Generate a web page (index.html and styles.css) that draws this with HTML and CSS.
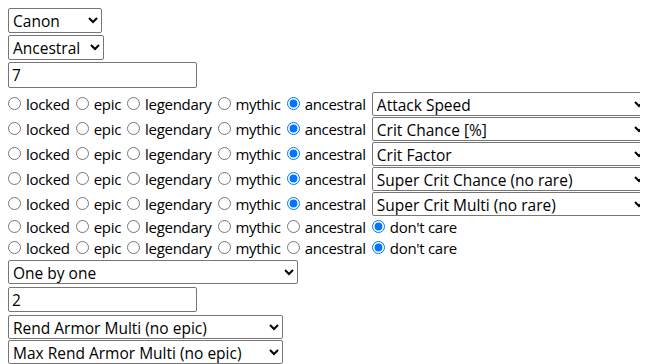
FILE: index.html
```html
<!DOCTYPE html>
<html>
<head>
<meta charset="utf-8">
<link rel="stylesheet" href="styles.css">
</head>
<body>
<div class="form">
  <select class="sel sel-type"><option>Canon</option></select>
  <select class="sel sel-rarity"><option>Ancestral</option></select>
  <input class="num num-level" type="text" value="7">
  <div class="slots">
    <div class="slot">
      <label class="opt"><input type="radio" name="s1"><span>locked</span></label>
      <label class="opt"><input type="radio" name="s1"><span>epic</span></label>
      <label class="opt"><input type="radio" name="s1"><span>legendary</span></label>
      <label class="opt"><input type="radio" name="s1"><span>mythic</span></label>
      <label class="opt"><input type="radio" name="s1" checked><span>ancestral</span></label>
      <select class="sel sel-stat"><option>Attack Speed</option></select>
    </div>
    <div class="slot">
      <label class="opt"><input type="radio" name="s2"><span>locked</span></label>
      <label class="opt"><input type="radio" name="s2"><span>epic</span></label>
      <label class="opt"><input type="radio" name="s2"><span>legendary</span></label>
      <label class="opt"><input type="radio" name="s2"><span>mythic</span></label>
      <label class="opt"><input type="radio" name="s2" checked><span>ancestral</span></label>
      <select class="sel sel-stat"><option>Crit Chance [%]</option></select>
    </div>
    <div class="slot">
      <label class="opt"><input type="radio" name="s3"><span>locked</span></label>
      <label class="opt"><input type="radio" name="s3"><span>epic</span></label>
      <label class="opt"><input type="radio" name="s3"><span>legendary</span></label>
      <label class="opt"><input type="radio" name="s3"><span>mythic</span></label>
      <label class="opt"><input type="radio" name="s3" checked><span>ancestral</span></label>
      <select class="sel sel-stat"><option>Crit Factor</option></select>
    </div>
    <div class="slot">
      <label class="opt"><input type="radio" name="s4"><span>locked</span></label>
      <label class="opt"><input type="radio" name="s4"><span>epic</span></label>
      <label class="opt"><input type="radio" name="s4"><span>legendary</span></label>
      <label class="opt"><input type="radio" name="s4"><span>mythic</span></label>
      <label class="opt"><input type="radio" name="s4" checked><span>ancestral</span></label>
      <select class="sel sel-stat"><option>Super Crit Chance (no rare)</option></select>
    </div>
    <div class="slot">
      <label class="opt"><input type="radio" name="s5"><span>locked</span></label>
      <label class="opt"><input type="radio" name="s5"><span>epic</span></label>
      <label class="opt"><input type="radio" name="s5"><span>legendary</span></label>
      <label class="opt"><input type="radio" name="s5"><span>mythic</span></label>
      <label class="opt"><input type="radio" name="s5" checked><span>ancestral</span></label>
      <select class="sel sel-stat"><option>Super Crit Multi (no rare)</option></select>
    </div>
    <div class="slot slot-short">
      <label class="opt"><input type="radio" name="s6"><span>locked</span></label>
      <label class="opt"><input type="radio" name="s6"><span>epic</span></label>
      <label class="opt"><input type="radio" name="s6"><span>legendary</span></label>
      <label class="opt"><input type="radio" name="s6"><span>mythic</span></label>
      <label class="opt"><input type="radio" name="s6"><span>ancestral</span></label>
      <label class="opt"><input type="radio" name="s6" checked><span>don't care</span></label>
    </div>
    <div class="slot slot-short">
      <label class="opt"><input type="radio" name="s7"><span>locked</span></label>
      <label class="opt"><input type="radio" name="s7"><span>epic</span></label>
      <label class="opt"><input type="radio" name="s7"><span>legendary</span></label>
      <label class="opt"><input type="radio" name="s7"><span>mythic</span></label>
      <label class="opt"><input type="radio" name="s7"><span>ancestral</span></label>
      <label class="opt"><input type="radio" name="s7" checked><span>don't care</span></label>
    </div>
  </div>
  <select class="sel sel-mode"><option>One by one</option></select>
  <input class="num num-count" type="text" value="2">
  <select class="sel sel-rend"><option>Rend Armor Multi (no epic)</option></select>
  <select class="sel sel-maxrend"><option>Max Rend Armor Multi (no epic)</option></select>
</div>
</body>
</html>
```
FILE: styles.css
```css
html, body {
  background: #ffffff;
}
body {
  margin: 8px;
  font-family: "Open Sans", "Noto Sans", sans-serif;
  font-size: 15px;
  color: #000000;
}
.form {
  display: flex;
  flex-direction: column;
  align-items: flex-start;
}
.sel {
  font: inherit;
  font-size: 15.5px;
  color: #000000;
  background: #ffffff;
  box-sizing: border-box;
  height: 25px;
  border: 1px solid #767676;
  border-radius: 2px;
  padding: 0;
  margin: 0;
  flex-shrink: 0;
}
.num {
  font: inherit;
  font-size: 15.5px;
  color: #000000;
  background: #ffffff;
  box-sizing: border-box;
  width: 189px;
  border: 1px solid #767676;
  border-radius: 2px;
  padding: 0 3px;
  margin: 0;
  outline: none;
}
.sel-type { width: 94px; }
.sel-rarity { width: 96px; margin-top: 2px; }
.num-level { height: 26px; margin-top: 2px; }
.slots {
  margin-top: 3px;
  display: flex;
  flex-direction: column;
}
.slot {
  display: flex;
  align-items: center;
  height: 25px;
}
.slot-short { height: 21px; }
.opt {
  display: flex;
  align-items: center;
  margin-right: 6px;
  white-space: nowrap;
  flex-shrink: 0;
}
.opt span {
  letter-spacing: -0.3px;
}
.opt input {
  width: 13px;
  height: 13px;
  margin: 0 5px 0 0;
}
.sel-stat { width: 276px; height: 24px; }
.sel-mode { width: 290px; height: 24px; margin-top: 2px; }
.num-count { height: 25px; margin-top: 3px; }
.sel-rend { width: 275px; height: 24px; margin-top: 3px; }
.sel-maxrend { width: 275px; height: 24px; margin-top: 1px; }
```
